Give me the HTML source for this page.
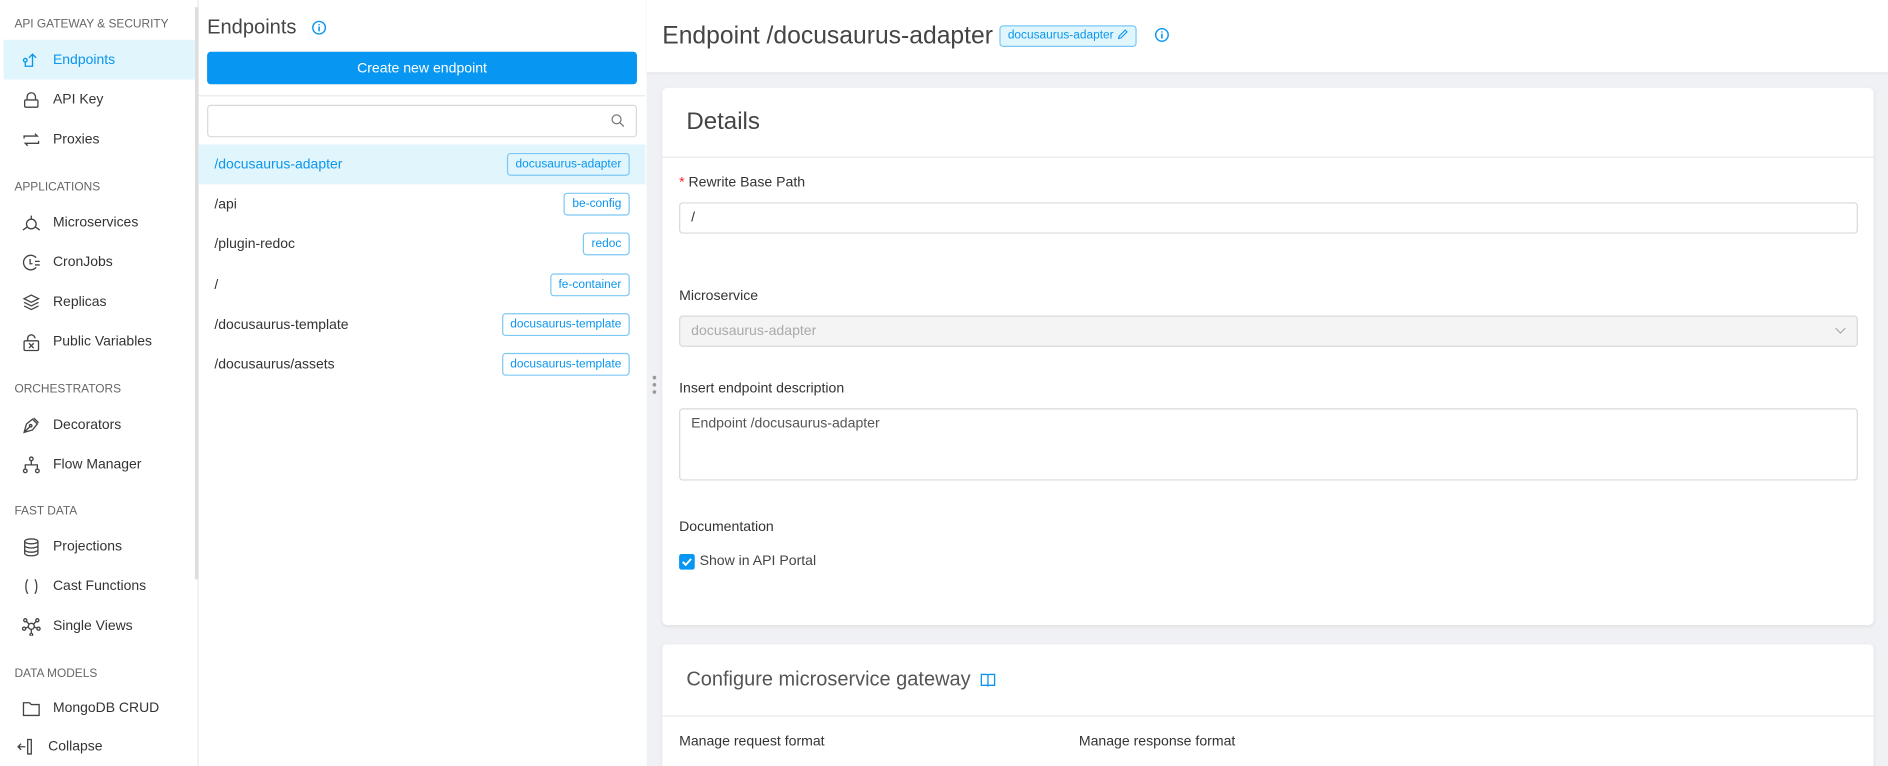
<!DOCTYPE html>
<html><head><meta charset="utf-8">
<style>
*{box-sizing:border-box;margin:0;padding:0}
html,body{width:1888px;height:766px;overflow:hidden;background:#fff}
#w{width:1568px;height:636px;transform:scale(1.20408,1.2044);transform-origin:0 0;position:relative;overflow:hidden;font-family:"Liberation Sans",sans-serif;color:#333;background:#fff;font-size:11.7px}
.abs{position:absolute}
.sb{left:0;top:0;width:165px;height:636px;border-right:1px solid #e8e8e8;background:#fff}
.sec{position:absolute;left:12px;font-size:9.9px;color:#666}
.it{position:absolute;left:3px;width:159px;height:33px;display:flex;align-items:center;padding-left:15px;font-size:11.6px;color:#333}
.it svg{width:16px;height:16px;margin-right:10px;fill:none;stroke:#444;stroke-width:1.1}
.it.act{background:#e1f5fd;color:#0a96ee}
.it.act svg{stroke:#0a96ee}
.mid{left:165px;top:0;width:371px;height:636px;background:#fff}
.row{position:absolute;left:0;width:371px;height:33px;display:flex;align-items:center;justify-content:space-between;padding:0 13px 0 13px;font-size:11.6px;color:#333}
.row.act{background:#e1f5fd;color:#0a96ee}
.tag{border:1px solid #7cc8f5;border-radius:3px;color:#0a96ee;font-size:9.9px;padding:3px 6px;background:#fff;line-height:11px}
.row.act .tag{background:#e1f5fd}
.right{left:537px;top:0;width:1031px;height:636px;background:#f0f1f4}
.card{position:absolute;background:#fff;border-radius:4px;box-shadow:0 1px 3px rgba(0,0,0,.08)}
.lbl{position:absolute;left:14px;font-size:11.7px;color:#333}
.inp{position:absolute;left:14px;width:979px;border:1px solid #d9d9d9;border-radius:3px;font-size:11.7px;padding-left:9px}
</style></head><body><div id="w">
<div class="abs sb">
  <div class="abs" style="left:162px;top:6px;width:3px;height:475px;background:#ddd"></div>
  <div class="sec" style="top:15px">API GATEWAY &amp; SECURITY</div>
  <div class="it act" style="top:33px"><svg viewBox="0 0 16 16"><circle cx="3" cy="8" r="1.5"/><path d="M3 9.5V13h6V3M6 6l3-3 3 3"/></svg>Endpoints</div>
  <div class="it" style="top:66px"><svg viewBox="0 0 16 16"><rect x="2.5" y="8" width="11" height="6" rx="1"/><path d="M4.5 8V5.5a3.5 3.5 0 0 1 7 0V8"/></svg>API Key</div>
  <div class="it" style="top:99px"><svg viewBox="0 0 16 16"><path d="M2 7V5h11l-2-2M14 9v2H3l2 2"/></svg>Proxies</div>
  <div class="sec" style="top:150px">APPLICATIONS</div>
  <div class="it" style="top:168px"><svg viewBox="0 0 16 16"><circle cx="8" cy="9" r="4"/><path d="M8 2v3M1 14l3.5-2.5M15 14l-3.5-2.5"/></svg>Microservices</div>
  <div class="it" style="top:201px"><svg viewBox="0 0 16 16"><path d="M12 4a6 6 0 1 0 0 8"/><path d="M7 5v4h2M11 7h4M11 10h4"/></svg>CronJobs</div>
  <div class="it" style="top:234px"><svg viewBox="0 0 16 16"><path d="M8 2l6 3-6 3-6-3zM2 8l6 3 6-3M2 11l6 3 6-3"/></svg>Replicas</div>
  <div class="it" style="top:267px"><svg viewBox="0 0 16 16"><rect x="2" y="7" width="12" height="8" rx="1"/><path d="M5 7V5a3 3 0 0 1 6 0M6 9l4 4M10 9l-4 4"/></svg>Public Variables</div>
  <div class="sec" style="top:318px">ORCHESTRATORS</div>
  <div class="it" style="top:336px"><svg viewBox="0 0 16 16"><path d="M2 14l2-7 5-4 4 4-4 5zM2 14l5-5M10 2l4 4"/><circle cx="7.5" cy="8.5" r="1"/></svg>Decorators</div>
  <div class="it" style="top:369px"><svg viewBox="0 0 16 16"><circle cx="8" cy="3" r="1.5"/><circle cx="3" cy="13" r="1.5"/><circle cx="13" cy="13" r="1.5"/><path d="M8 4.5V8M3 11.5V8h10v3.5"/></svg>Flow Manager</div>
  <div class="sec" style="top:419px">FAST DATA</div>
  <div class="it" style="top:437px"><svg viewBox="0 0 16 16"><ellipse cx="8" cy="3.5" rx="5.5" ry="2"/><path d="M2.5 3.5v10c0 1 2.5 2 5.5 2s5.5-1 5.5-2v-10M2.5 7c0 1 2.5 2 5.5 2s5.5-1 5.5-2M2.5 10.5c0 1 2.5 2 5.5 2s5.5-1 5.5-2"/></svg>Projections</div>
  <div class="it" style="top:470px"><svg viewBox="0 0 16 16"><path d="M5 2c-2 3-2 9 0 12M11 2c2 3 2 9 0 12"/></svg>Cast Functions</div>
  <div class="it" style="top:503px"><svg viewBox="0 0 16 16"><circle cx="8" cy="8" r="2.5"/><circle cx="3" cy="3" r="1.3"/><circle cx="13" cy="3" r="1.3"/><circle cx="2" cy="10" r="1.3"/><circle cx="14" cy="10" r="1.3"/><circle cx="8" cy="15" r="1.1"/><path d="M4 4l2.3 2.3M12 4l-2.3 2.3M3.2 9.5l2.5-1M12.8 9.5l-2.5-1M8 10.5v3"/></svg>Single Views</div>
  <div class="sec" style="top:554px">DATA MODELS</div>
  <div class="it" style="top:571px"><svg viewBox="0 0 16 16"><path d="M1.5 3.5h5l1.5 1.5h6.5v9h-13z"/></svg>MongoDB CRUD</div>
  <div class="it" style="top:603px;left:0;padding-left:14px"><svg viewBox="0 0 16 16"><path d="M9 2h3v12H9zM1 8h6M3.5 5.5L1 8l2.5 2.5"/></svg>Collapse</div>
</div>

<div class="abs mid">
  <div class="abs" style="left:7px;top:13px;font-size:16.7px;color:#444">Endpoints</div>
  <svg class="abs" style="left:94px;top:17px" width="12" height="12" viewBox="0 0 12 12"><circle cx="6" cy="6" r="5.2" fill="none" stroke="#0a96ee" stroke-width="1.2"/><path d="M6 5v4M6 3v1" stroke="#0a96ee" stroke-width="1.3"/></svg>
  <div class="abs" style="left:7px;top:43px;width:357px;height:27px;background:#0796f2;border-radius:3px;color:#fff;font-size:11.7px;display:flex;align-items:center;justify-content:center">Create new endpoint</div>
  <div class="abs" style="left:0;top:79px;width:371px;height:1px;background:#e8e8e8"></div>
  <div class="abs" style="left:7px;top:87px;width:357px;height:27px;border:1px solid #d9d9d9;border-radius:3px"></div>
  <svg class="abs" style="left:342px;top:94px" width="12" height="12" viewBox="0 0 13 13"><circle cx="5.5" cy="5.5" r="4" fill="none" stroke="#777" stroke-width="1.1"/><path d="M8.5 8.5l3.5 3.5" stroke="#777" stroke-width="1.2"/></svg>
  <div class="row act" style="top:120px"><span>/docusaurus-adapter</span><span class="tag">docusaurus-adapter</span></div>
  <div class="row" style="top:153px"><span>/api</span><span class="tag">be-config</span></div>
  <div class="row" style="top:186px"><span>/plugin-redoc</span><span class="tag">redoc</span></div>
  <div class="row" style="top:220px"><span>/</span><span class="tag">fe-container</span></div>
  <div class="row" style="top:253px"><span>/docusaurus-template</span><span class="tag">docusaurus-template</span></div>
  <div class="row" style="top:286px"><span>/docusaurus/assets</span><span class="tag">docusaurus-template</span></div>
</div>

<div class="abs right">
  <div class="abs" style="left:0;top:0;width:1031px;height:60px;background:#fff;box-shadow:0 1px 2px rgba(0,0,0,.06)"></div>
  <div class="abs" style="left:13px;top:18px;font-size:20.5px;color:#444">Endpoint /docusaurus-adapter</div>
  <div class="abs" style="left:293px;top:21px;height:18px;border:1px solid #7cc8f5;background:#e1f5fd;border-radius:3px;color:#0a96ee;font-size:9.9px;padding:0 6px;line-height:16px">docusaurus-adapter <svg width="9" height="9" viewBox="0 0 9 9" style="vertical-align:-1px"><path d="M1 8l.5-2L6.5 1 8 2.5 3 7.5z" fill="none" stroke="#0a96ee" stroke-width=".9"/></svg></div>
  <svg class="abs" style="left:422px;top:23px" width="12" height="12" viewBox="0 0 12 12"><circle cx="6" cy="6" r="5.2" fill="none" stroke="#0a96ee" stroke-width="1.2"/><path d="M6 5v4M6 3v1" stroke="#0a96ee" stroke-width="1.3"/></svg>
  <div class="abs" style="left:5px;top:312px;width:3px;height:3px;border-radius:2px;background:#999"></div>
  <div class="abs" style="left:5px;top:318px;width:3px;height:3px;border-radius:2px;background:#999"></div>
  <div class="abs" style="left:5px;top:324px;width:3px;height:3px;border-radius:2px;background:#999"></div>

  <div class="card" style="left:13px;top:73px;width:1006px;height:446px">
    <div class="abs" style="left:20px;top:17px;font-size:20px;color:#444">Details</div>
    <div class="abs" style="left:0;top:57px;width:1006px;height:1px;background:#e8e8e8"></div>
    <div class="lbl" style="top:72px"><span style="color:#f5222d">*</span> Rewrite Base Path</div>
    <div class="inp" style="top:95px;height:26px;line-height:24px">/</div>
    <div class="lbl" style="top:166px">Microservice</div>
    <div class="inp" style="top:189px;height:26px;line-height:24px;background:#f4f4f4;color:#aaa">docusaurus-adapter
      <svg class="abs" style="right:9px;top:9px" width="9" height="6" viewBox="0 0 9 6"><path d="M0.5 0.5l4 4 4-4" fill="none" stroke="#aaa"/></svg></div>
    <div class="lbl" style="top:243px">Insert endpoint description</div>
    <div class="inp" style="top:266px;height:60px;padding-top:5px;color:#555">Endpoint /docusaurus-adapter</div>
    <div class="lbl" style="top:358px">Documentation</div>
    <div class="abs" style="left:14px;top:387px;width:13px;height:13px;background:#0796f2;border-radius:2px"><svg width="13" height="13" viewBox="0 0 13 13"><path d="M3 6.5l2.5 2.5 4.5-5" fill="none" stroke="#fff" stroke-width="1.6"/></svg></div>
    <div class="abs" style="left:31px;top:386px;font-size:11.7px;color:#444">Show in API Portal</div>
  </div>

  <div class="card" style="left:13px;top:535px;width:1006px;height:120px">
    <div class="abs" style="left:20px;top:19px;font-size:16.6px;color:#555">Configure microservice gateway</div>
    <svg class="abs" style="left:264px;top:24px" width="13" height="12" viewBox="0 0 13 12"><path d="M1 1h4.5c.6 0 1 .4 1 1v9c0-.6-.4-1-1-1H1zM12 1H7.5c-.6 0-1 .4-1 1v9c0-.6.4-1 1-1H12z" fill="none" stroke="#0a96ee" stroke-width="1.1"/></svg>
    <div class="abs" style="left:0;top:59px;width:1006px;height:1px;background:#e8e8e8"></div>
    <div class="lbl" style="top:74px">Manage request format</div>
    <div class="lbl" style="top:74px;left:346px">Manage response format</div>
  </div>
</div>
</div></body></html>
